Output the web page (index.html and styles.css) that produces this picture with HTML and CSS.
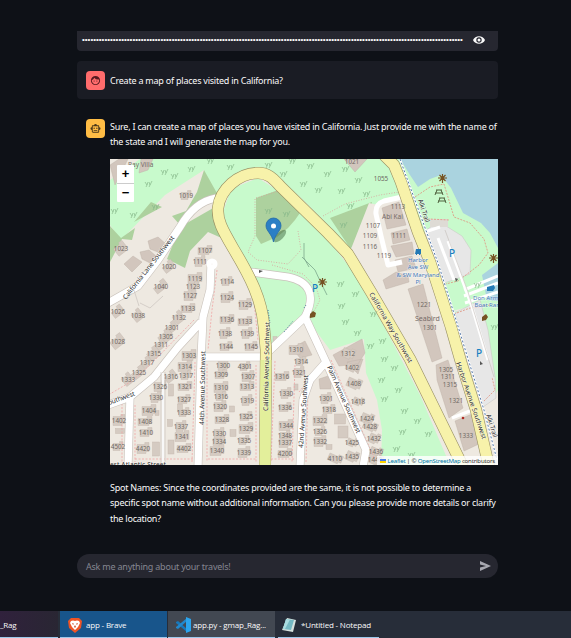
FILE: index.html
```
<!DOCTYPE html>
<html lang="en">
<head>
<meta charset="utf-8">
<title>app</title>
<link rel="stylesheet" href="styles.css">
</head>
<body>
<main class="page">
  <div class="secret">
    <div class="dots">••••••••••••••••••••••••••••••••••••••••••••••••••••••••••••••••••••••••••••••••••••••••••••••••••••••••••••••••••••••••••••••••••••••••</div>
    <svg class="eye" viewBox="0 0 12 10"><path d="M0 5C2-.1 10-.1 12 5 10 10.100 2 10.100 0 5z" fill="#fafafa"/><circle cx="6" cy="5" r="2.700" fill="#262730"/><circle cx="6" cy="5" r="1.500" fill="#fafafa"/></svg>
  </div>
  <section class="message user">
    <div class="avatar red"><svg viewBox="0 0 24 24"><path d="M9 11.750a1.250 1.250 0 1 0 0 2.500 1.250 1.250 0 0 0 0-2.500zm6 0a1.250 1.250 0 1 0 0 2.500 1.250 1.250 0 0 0 0-2.500zM12 2a10 10 0 1 0 0 20 10 10 0 0 0 0-20zm0 18c-4.400 0-8-3.600-8-8 0-.3 0-.6.050-.860 2.360-1.050 4.230-2.980 5.210-5.370A9.970 9.970 0 0 0 17.400 10c.780 0 1.530-.090 2.250-.260.210.710.330 1.470.330 2.260.020 4.400-3.580 8-7.980 8z"/></svg></div>
    <p class="text">Create a map of places visited in California?</p>
  </section>
  <section class="message bot">
    <div class="avatar amber"><svg viewBox="0 0 24 24"><path fill-rule="evenodd" d="M20 9V7c0-1.100-.9-2-2-2h-3a3 3 0 0 0-6 0H6c-1.100 0-2 .9-2 2v2a3 3 0 0 0 0 6v4c0 1.100.9 2 2 2h12c1.100 0 2-.9 2-2v-4a3 3 0 0 0 0-6zm-2 10H6V7h12zM9 10a1.500 1.500 0 1 0 0 3 1.500 1.500 0 0 0 0-3zm6 0a1.500 1.500 0 1 0 0 3 1.500 1.500 0 0 0 0-3zM8 15h8v2H8z"/></svg></div>
    <div class="body">
      <p class="text">Sure, I can create a map of places you have visited in California. Just provide me with the name of<br>the state and I will generate the map for you.</p>
      <div class="map">
        <svg class="tiles" viewBox="110 159 388 306">
          <rect x="110" y="159" width="388" height="306" fill="#eee9e1"/>
          <g fill="#c8facc">
            <path d="M140 159H498V250L480 300 425 245 403 196 379 201 372 218 368 248 350 255 338 235 300 197 280 180 258 172 240 174 222 188 214 202 204 170 165 195 121 240 110 225V180z"/>
            <path d="M258 178L282 193 305 216 328 240 352 270 385 328 420 395 450 465H381L382 430 377 400 366 373 364 339 330 350 308 320 271 352 266 310 255 275 230 238 223 212 231 189z"/>
            <path d="M433 258L498 225V320L480 304 448 312zM452 312L498 305V390L492 400z"/>
          </g>
          <path d="M400 159L410 175 418 187 430 179 441 175 451 188 463 213 481 223 490 233 498 248V159z" fill="#aad3df"/>
          <path d="M482 275L498 263V301L487 300z" fill="#aad3df"/>
          <g fill="#add19e">
            <path d="M256 198L281 189 302 210 295 220 288 228 277 237 261 244 256 236zM330 218L372 202 364 245 350 248zM204 170L218 195 198 207 180 225 172 216 186 211 197 192zM180 227L215 207 214 222 226 240 208 232 190 251 185 268 167 259zM110 226L121 238 135 228 132 240 122 239 110 262zM134 222L151 202 162 207z"/>
          </g>
          <path d="M369 203L378 205 384 247 405 265 430 261 458 330 483 390 493 465H465L422 388 372 298 349 254z" fill="#eee9e1"/>
          <path d="M425 231L432 226H446L462 236 471 250 470 274 453 280 435 286 427 268zM455 313L480 300 488 330 495 377 496 398 483 407 471 372z" fill="#e7e7e7" stroke="#c7c4c0" stroke-width=".5"/>
          <path d="M430 219h18v8h-18z" fill="#dedbd5"/>
          <g fill="#d2c6bd" stroke="#bcaea4" stroke-width=".4">
            <path d="M382 208L399 202 406 225 387 229zM391 233L407 229 410 240 393 244zM391 246L412 242 414 254 396 257zM395 260L412 256 416 268 398 272zM383 280L396 272 408 276 409 282 386 289zM408 289L423 284 442 358 432 362zM436 365L448 360 463 408 449 418 437 380zM455 421L472 414 479 444 464 451zM344 159L367 159 355 172zM124 264L133 256 142 262 132 272zM148 241L158 237 166 244 158 252 150 249zM140 252L149 250 156 256 150 263 142 259zM141 159L153 159 148 170 139 173zM292 348L305 341 312 355 300 358zM333 355L362 339 365 353 358 364 339 366zM347 362L363 359 358 374zM319 379L331 375 331 389 320 389zM110 165L119 159 128 159 115 185z"/>
          </g>
          <g id="houses"></g>
          <g fill="none" stroke="#f0a5a5" stroke-width=".8" stroke-dasharray="2 1.500">
            <path d="M217 270L212 310 208 350M194 320L150 365 132 381 110 394M135 405V462M195 362L192 462M207 364V462M256 365V462M275 361L271 462M295 365L292 462M308 390L306 462M331 360L376 462M318 369L299 392M135 459H193M208 459H256M271 459H294M122 400V462M252 282L258 340"/>
          </g>
          <g fill="none" stroke="#d8a09a" stroke-width=".8" stroke-dasharray="1 1.600">
            <path d="M256 198L282 190M255 199V236L248 252 257 260 288 264 301 250 298 231M323 216L345 204 380 195 399 192M272 265L303 274 316 287 320 300 313 313 306 321"/>
            <path stroke-dasharray="2 1.200" stroke="#e0917c" d="M415 197L430 187 444 184 454 217 470 223 484 239 488 253 479 265 458 281 433 287M454 314L470 308 490 305M418 220L429 219 449 220M484 401L495 390 492 377"/>
          </g>
          <g fill="none" stroke="#c9c2bb" stroke-width="8.500" stroke-linejoin="round">
            <path d="M216 198C199 201 188 213 180 227L158 260 138 286 108 303M211 265L210 290 203 317 201 360 198 467M201 322L178 347 154 377 130 397 108 405M130 397L128 467M203 357H263M251 272L288 277C308 281 317 294 305 317L267 353M306 319L326 362 366 450 363 467M326 362L310 380 303 400 300 467"/>
          </g>
          <g fill="none" stroke="#fff" stroke-linejoin="round">
            <path stroke-width="7.300" d="M216 198C199 201 188 213 180 227L158 260 138 286 108 303M211 265L210 290 203 317 201 360 198 467M201 322L178 347 154 377 130 397 108 405M130 397L128 467M203 357H263M251 272L288 277C308 281 317 294 305 317L267 353M306 319L326 362 366 450 363 467M326 362L310 380 303 400 300 467"/>
            <circle cx="212" cy="264" r="3" stroke-width="5"/>
            <path stroke-width="5" d="M402 197L384 201Q375 204 376 214L381 236 388 265 402 262"/>
            <path stroke-width="3" d="M425 232L440 227M452 418L480 407M464 290L498 276M464 296L498 283M465 303L498 292M438 238L454 280M448 241L472 307 488 360"/>
            <path stroke-width="2.500" stroke="#f8f8f8" d="M163 373V465"/>
          </g>
          <g fill="none" stroke="#c2bcb7" stroke-width=".6"><path d="M161 372V465M165 372V465M445 230L468 292 494 377M438 298L460 360M140 303L150 308 163 296M133 287L139 306"/></g>
          <g fill="none" stroke-linejoin="round">
            <g stroke="#989064" stroke-width="12">
              <path d="M265 467L266 350 264 327C262 300 251 278 233 248 222 229 217 220 218 208 220 189 239 173 258 173 270 173 275 181 281 187L328 233 348 254 371 292 410 359 463 467"/>
              <path d="M384 155L394 165 401 182 418 232 430 262 451 327 461 362 476 410 489 467"/>
            </g>
            <g stroke="#f7f2aa" stroke-width="10.800">
              <path d="M265 467L266 350 264 327C262 300 251 278 233 248 222 229 217 220 218 208 220 189 239 173 258 173 270 173 275 181 281 187L328 233 348 254 371 292 410 359 463 467"/>
              <path d="M384 155L394 165 401 182 418 232 430 262 451 327 461 362 476 410 489 467"/>
              <path d="M265 465L266 360" stroke="#e3ef9b"/>
            </g>
          </g>
          <path d="M400 159L405 173 424 225 438 263 457 323 469 362 484 410 497 460" fill="none" stroke="#fff" stroke-width="2"/>
          <path d="M400 159L405 173 424 225 438 263 457 323 469 362 484 410 497 460" fill="none" stroke="#5479aa" stroke-width="1" stroke-dasharray="2 2"/>
          <path d="M304 243V258L309 267M302 257L315 270 321 283 327 295" fill="none" stroke="#7ba78b" stroke-width=".8"/>
          <path d="M268 310L270 323M284 332L293 321M304 308L306 305" fill="none" stroke="#507fa0" stroke-width="1" stroke-dasharray="1 1.500"/>
          <g id="trees"></g>
          <g id="labels"></g>
          <g class="road">
            <text transform="translate(126 300) rotate(-52)" textLength="79">California Lane Southwest</text>
            <text transform="translate(204 425) rotate(-89)" textLength="74">44th Avenue Southwest</text>
            <text transform="translate(268 411) rotate(-89)" textLength="89">California Avenue Southwest</text>
            <text transform="translate(303 448) rotate(-86)" textLength="73">42nd Avenue Southwest</text>
            <text transform="translate(327 367) rotate(66)" textLength="73">Palm Avenue Southwest</text>
            <text transform="translate(369 294) rotate(60)" textLength="80">California Way Southwest</text>
            <text transform="translate(456 363) rotate(71)" textLength="81">Harbor Avenue Southwest</text>
            <text transform="translate(418 200) rotate(72)" textLength="24">Alki Trail</text>
            <text transform="translate(486 415) rotate(72)" textLength="24">Alki Trail</text>
            <text transform="translate(109 405) rotate(-20)" textLength="28">outhwest</text>
            <text x="110" y="467" textLength="56">est Atlantic Street</text>
          </g>
          <g class="place">
            <text x="128" y="167">Ray Villa</text><text x="382" y="219">Abi Kai</text><text x="415" y="321" class="big">Seabird</text>
          </g>
          <g class="blue">
            <text x="418" y="262">Harbor</text><text x="418" y="269">Ave SW</text><text x="418" y="277">&amp; SW Maryland</text><text x="418" y="284">Pl</text>
            <text x="490" y="300">Don Armeni</text><text x="490" y="307">Boat Ramp</text>
            <text class="p" x="452" y="257">P</text><text class="p" x="479" y="357">P</text><text class="p" x="315" y="292">P</text>
          </g>
          <path d="M416 249h5v5h-1v1h-1v-1h-2v1h-1v-1h-1zM487 287l7-2 1 3-2 3h-6z" fill="#2379b5"/>
          <g fill="none" stroke="#765223" stroke-width="1.200">
            <path id="spot" d="M438 178h9M442.500 174v9M439.500 175l6 6M445.500 175l-6 6"/>
            <use href="#spot" x="51" y="80"/><use href="#spot" x="-120" y="104"/>
          </g>
          <g fill="none" stroke="#50623f"><path id="table" d="M436 190h6M435 193h8M437 190l-2 5M441 190l2 5"/><use href="#table" x="3" y="8"/></g>
          <g fill="#765223"><path d="M310 314l3-3 3 2-1 4-5 1zM482 317l4-3 2 3-2 3-4 1z"/><circle cx="463" cy="418" r="1.300" fill="#b02b24"/></g>
          <g fill="#555"><path d="M259 270l4 1-4 2zM455 278l3 1-2 3zM480 361l3 3-3 1z"/></g>
          <ellipse cx="280" cy="236" rx="8" ry="3.500" transform="rotate(-45 280 236)" fill="#315b32" opacity=".45"/>
          <path d="M273.500 242C272 234 266 231 266 225.500A7.500 7.500 0 0 1 281 225.500C281 231 275 234 273.500 242z" fill="#2b7fc5" stroke="#236aa6" stroke-width=".8"/>
          <circle cx="273.500" cy="226" r="2.500" fill="#fff"/>
        </svg>
        <div class="zoom"><span>+</span><span>−</span></div>
        <div class="credit"><svg viewBox="0 0 12 8"><path fill="#4c7be1" d="M0 0h12v4H0z"/><path fill="#ffd500" d="M0 4h12v4H0z"/></svg><a>Leaflet</a> | © <a>OpenStreetMap</a> contributors</div>
      </div>
      <p class="text notes">Spot Names: Since the coordinates provided are the same, it is not possible to determine a<br>specific spot name without additional information. Can you please provide more details or clarify<br>the location?</p>
    </div>
  </section>
  <div class="prompt"><span>Ask me anything about your travels!</span><svg viewBox="0 0 11 10"><path d="M0 0L11 5 0 10V6.500L6 5 0 3.500z" fill="#a7a8b0"/></svg></div>
</main>
<footer class="taskbar">
  <div class="task first">_Rag</div>
  <div class="task brave"><svg viewBox="0 0 14 16"><path d="M3 1h8l3 3-1 7-6 5-6-5L0 4z" fill="#ee5426"/><path d="M3 4l2-.5 2 .5 2-.5 2 .5 1 2-2 4-3 3-3-3-2-4z" fill="#fff"/><path d="M4 6l2 .7L5 8zM10 6l-2 .7L9 8zM7 8l1 2-1 .7L6 10z" fill="#c64625"/></svg><span>app - Brave</span></div>
  <div class="task code"><svg viewBox="0 0 16 16"><path d="M1 5l2-1 9 8v3L1 6z" fill="#1679bd"/><path d="M1 11l2 1 9-8V1L1 10z" fill="#2188cd"/><path d="M11 0l5 2v12l-5 2z" fill="#2ba5ee"/></svg><span>app.py - gmap_Rag...</span></div>
  <div class="task note"><svg viewBox="0 0 14 16"><path d="M5 1l9 2-3 12-11-2z" fill="#d7e2df"/><path d="M4 2l8 1-3 10-8-1z" fill="#75b9c3"/><path d="M4 2l4 .5L3 12l-2-.3z" fill="#a9dce0"/></svg><span>*Untitled - Notepad</span></div>
</footer>
<script src="map.js"></script>
</body>
</html>
```
FILE: styles.css
```
* { box-sizing: border-box; }
body { margin: 0; width: 571px; height: 638px; overflow: hidden; background: #0e1117; color: #fafafa; font-family: "Noto Sans", sans-serif; display: flex; flex-direction: column; }
.page { width: 421px; height: 611px; margin-left: 77px; padding-top: 31px; display: flex; flex-direction: column; }
.secret { height: 20px; background: #262730; border-radius: 0 0 4px 4px; display: flex; align-items: center; padding: 0 13px 2px 5px; flex: none; }
.dots { width: 382px; white-space: nowrap; font: 8px/12px "Liberation Sans", sans-serif; }
.eye { width: 12px; height: 10px; margin-left: auto; }
.message { display: flex; padding-left: 9px; flex: none; }
.user { height: 38px; margin-top: 10px; background: #1a1c24; border-radius: 4px; align-items: center; }
.avatar { width: 19px; height: 19px; border-radius: 4px; display: flex; align-items: center; justify-content: center; margin-right: 5px; flex: none; }
.avatar svg { width: 11px; height: 11px; }
.red { background: #ff6c6c; }
.red svg { fill: #56191f; }
.amber { background: #ffbd45; }
.amber svg { fill: #493718; }
.bot { margin-top: 19px; }
.bot .avatar { margin-top: 1px; }
.text { margin: 0; font-size: 9px; line-height: 15.400px; white-space: nowrap; letter-spacing: -.228px; padding-top: 1px; }
.body { width: 388px; }
.map { width: 388px; height: 306px; margin-top: 9px; position: relative; overflow: hidden; }
.tiles { display: block; width: 388px; height: 306px; }
.tiles text { font-family: "Noto Sans", sans-serif; }
.number { font-size: 6.300px; fill: #6f6863; text-anchor: middle; }
.house { fill: #d5cbc2; stroke: #c2b6ac; stroke-width: .4; }
.tree { fill: none; stroke: #86b889; stroke-width: .7; }
.road text { font-size: 6.600px; fill: #2c2c2c; paint-order: stroke; stroke: #ffffff88; stroke-width: 1px; }
.place text { font-size: 6.500px; fill: #766b68; }
.place .big { font-size: 7px; }
.blue text { font-size: 6px; fill: #3f78b7; text-anchor: middle; paint-order: stroke; stroke: #ffffff88; stroke-width: 1px; }
.blue .p { font-size: 10px; font-weight: 500; fill: #1680c2; stroke: none; }
.zoom { position: absolute; left: 7px; top: 6px; width: 17px; height: 37px; background: #fff; border-radius: 1px; color: #000; display: grid; grid-template-rows: 1fr 1fr; text-align: center; font: bold 13px/18px "Liberation Sans", sans-serif; }
.zoom span + span { border-top: 1px solid #ccc; }
.credit { position: absolute; right: 0; bottom: 0; height: 9px; padding: 0 3px; background: #ffffffd0; color: #333; font: 6.100px/9px "Noto Sans", sans-serif; white-space: nowrap; letter-spacing: -.2px; }
.credit a { color: #0078a8; }
.credit svg { width: 6px; height: 4px; margin-right: 2px; vertical-align: 0; }
.notes { margin-top: 14px; }
.prompt { height: 24px; margin-top: 28px; border-radius: 12px; background: #262730; color: #858690; font-size: 9px; letter-spacing: -.22px; display: flex; align-items: center; justify-content: space-between; padding: 0 7px 0 9px; flex: none; }
.prompt svg { width: 11px; height: 10px; }
.taskbar { height: 27px; display: flex; background: #272d39; font: 8px/26px "Open Sans", sans-serif; letter-spacing: -.18px; flex: none; white-space: nowrap; }
.task { height: 27px; border-bottom: 1px solid #9cc8eb; display: flex; align-items: center; padding-top: 1px; }
.task svg { width: 14px; height: 16px; flex: none; }
.first { width: 58px; margin-right: 2px; background: linear-gradient(90deg, #30213c, #292633); }
.brave { width: 107px; margin-right: 1px; padding-left: 8px; gap: 4px; background: #18558b; }
.code { width: 107px; margin-right: 3px; padding-left: 7px; gap: 2px; background: #424852; }
.code svg { width: 16px; height: 16px; }
.note { width: 101px; padding-left: 4px; gap: 5px; }
```
FILE: map.js
```
const ns = "http://www.w3.org/2000/svg";
const add = (parent, tag, attrs, text) => {
  const el = document.createElementNS(ns, tag);
  for (const key in attrs) el.setAttribute(key, attrs[key]);
  if (text) el.textContent = text;
  document.getElementById(parent).append(el);
};
// Building number, then its x and y on the map.
const buildings = `1019 186 196,1023 121 249,1107 205 251,1111 200 262,1020 169 267,1119 195 279,1123 193 287,1127 190 296,1133 188 309,1132 179 318,1301 172 328,1305 166 337,1311 161 345,1315 154 354,1040 161 287,1038 138 316,1026 118 312,1028 118 342,1114 227 282,1124 227 298,1136 227 320,1138 225 334,1144 226 347,1303 189 356,1317 147 363,1129 245 305,1133 245 322,1139 247 334,1145 251 347,1310 296 350,1314 301 362,1312 348 354,1325 139 373,1333 128 380,1316 171 377,1314 185 367,1317 186 376,1326 160 387,1321 185 387,1330 156 398,1327 184 400,1404 149 411,1333 184 413,1402 119 421,1408 145 422,1337 181 427,1410 146 433,1341 182 437,4502 118 447,4420 143 449,4402 184 449,1300 223 366,1309 221 375,1310 221 388,1316 221 397,1320 220 407,1328 222 420,1330 219 434,1334 219 442,1340 217 451,4301 245 367,1307 248 377,1313 247 387,1319 247 401,1325 246 417,1329 246 429,1335 244 441,1339 244 453,1316 282 377,1330 286 394,1336 285 408,1344 286 426,1348 285 436,1337 285 443,4200 285 454,1321 299 373,1402 352 368,1408 354 384,1418 358 402,1424 367 419,1428 370 427,1432 374 439,1436 376 452,1440 375 460,1425 352 443,1435 352 457,4110 335 459,1301 326 399,1318 329 410,1322 320 421,1326 320 432,1332 320 442`;
buildings.split(",").forEach((entry, i) => {
  const [n, xs, ys] = entry.split(" ");
  const x = +xs, y = +ys, w = 10 + i % 3 * 2, h = 7 + i % 2 * 2;
  const angle = x < 180 && y < 385 ? -38 : x > 330 ? 24 : 0;
  add("houses", "path", { class: "house", d: `M${x - w / 2} ${y - h / 2}h${w * .65}v-2h${w * .35}v${h}h-3v2h${3 - w}z`, transform: `rotate(${angle} ${x} ${y})` });
  add("labels", "text", { class: "number", x, y: y + 2 }, n);
});
const numbers = `1055 381 179,1021 352 162,1113 398 207,1107 373 226,1109 370 236,1116 370 247,1111 399 236,1119 384 256,1221 424 305,1301 430 328,1305 446 370,1311 448 377,1315 450 385,1321 456 401,1333 466 436`;
numbers.split(",").forEach(entry => {
  const [n, x, y] = entry.split(" ");
  add("labels", "text", { class: "number", x, y: +y + 2 }, n);
});
const small = [[180,408,5,8],[157,413,4,5],[156,449,7,14],[171,447,6,14],[170,423,5,7],[232,409,5,6],[233,433,6,7],[296,387,4,6],[340,419,11,10],[343,432,10,12],[329,447,6,5],[120,431,9,5],[171,390,5,12],[275,340,4,7]];
small.forEach(([x, y, w, h]) => add("houses", "rect", { class: "house", x: x - w / 2, y: y - h / 2, width: w, height: h }));
const trees = [[148,184],[133,215],[114,211],[155,207],[191,169],[210,161],[230,167],[268,165],[310,166],[292,161],[327,174],[345,169],[358,180],[283,174],[303,184],[318,190],[341,191],[366,194],[350,206],[268,211],[286,214],[343,225],[164,172],[174,176],[340,284],[355,294],[341,306],[373,314],[345,322],[357,333],[382,341],[384,359],[398,390],[381,380],[384,399],[404,411],[402,432],[417,421],[428,434],[396,449],[411,455],[394,368],[370,346],[477,285],[494,327]];
trees.forEach(([x, y]) => add("trees", "path", { class: "tree", d: `M${x - 3} ${y - 2}l2 3 1-3M${x + 1} ${y - 2}l1 3 2-4M${x - 1} ${y + 1}l-1 2M${x + 2} ${y + 1}l-1 2` }));
```
